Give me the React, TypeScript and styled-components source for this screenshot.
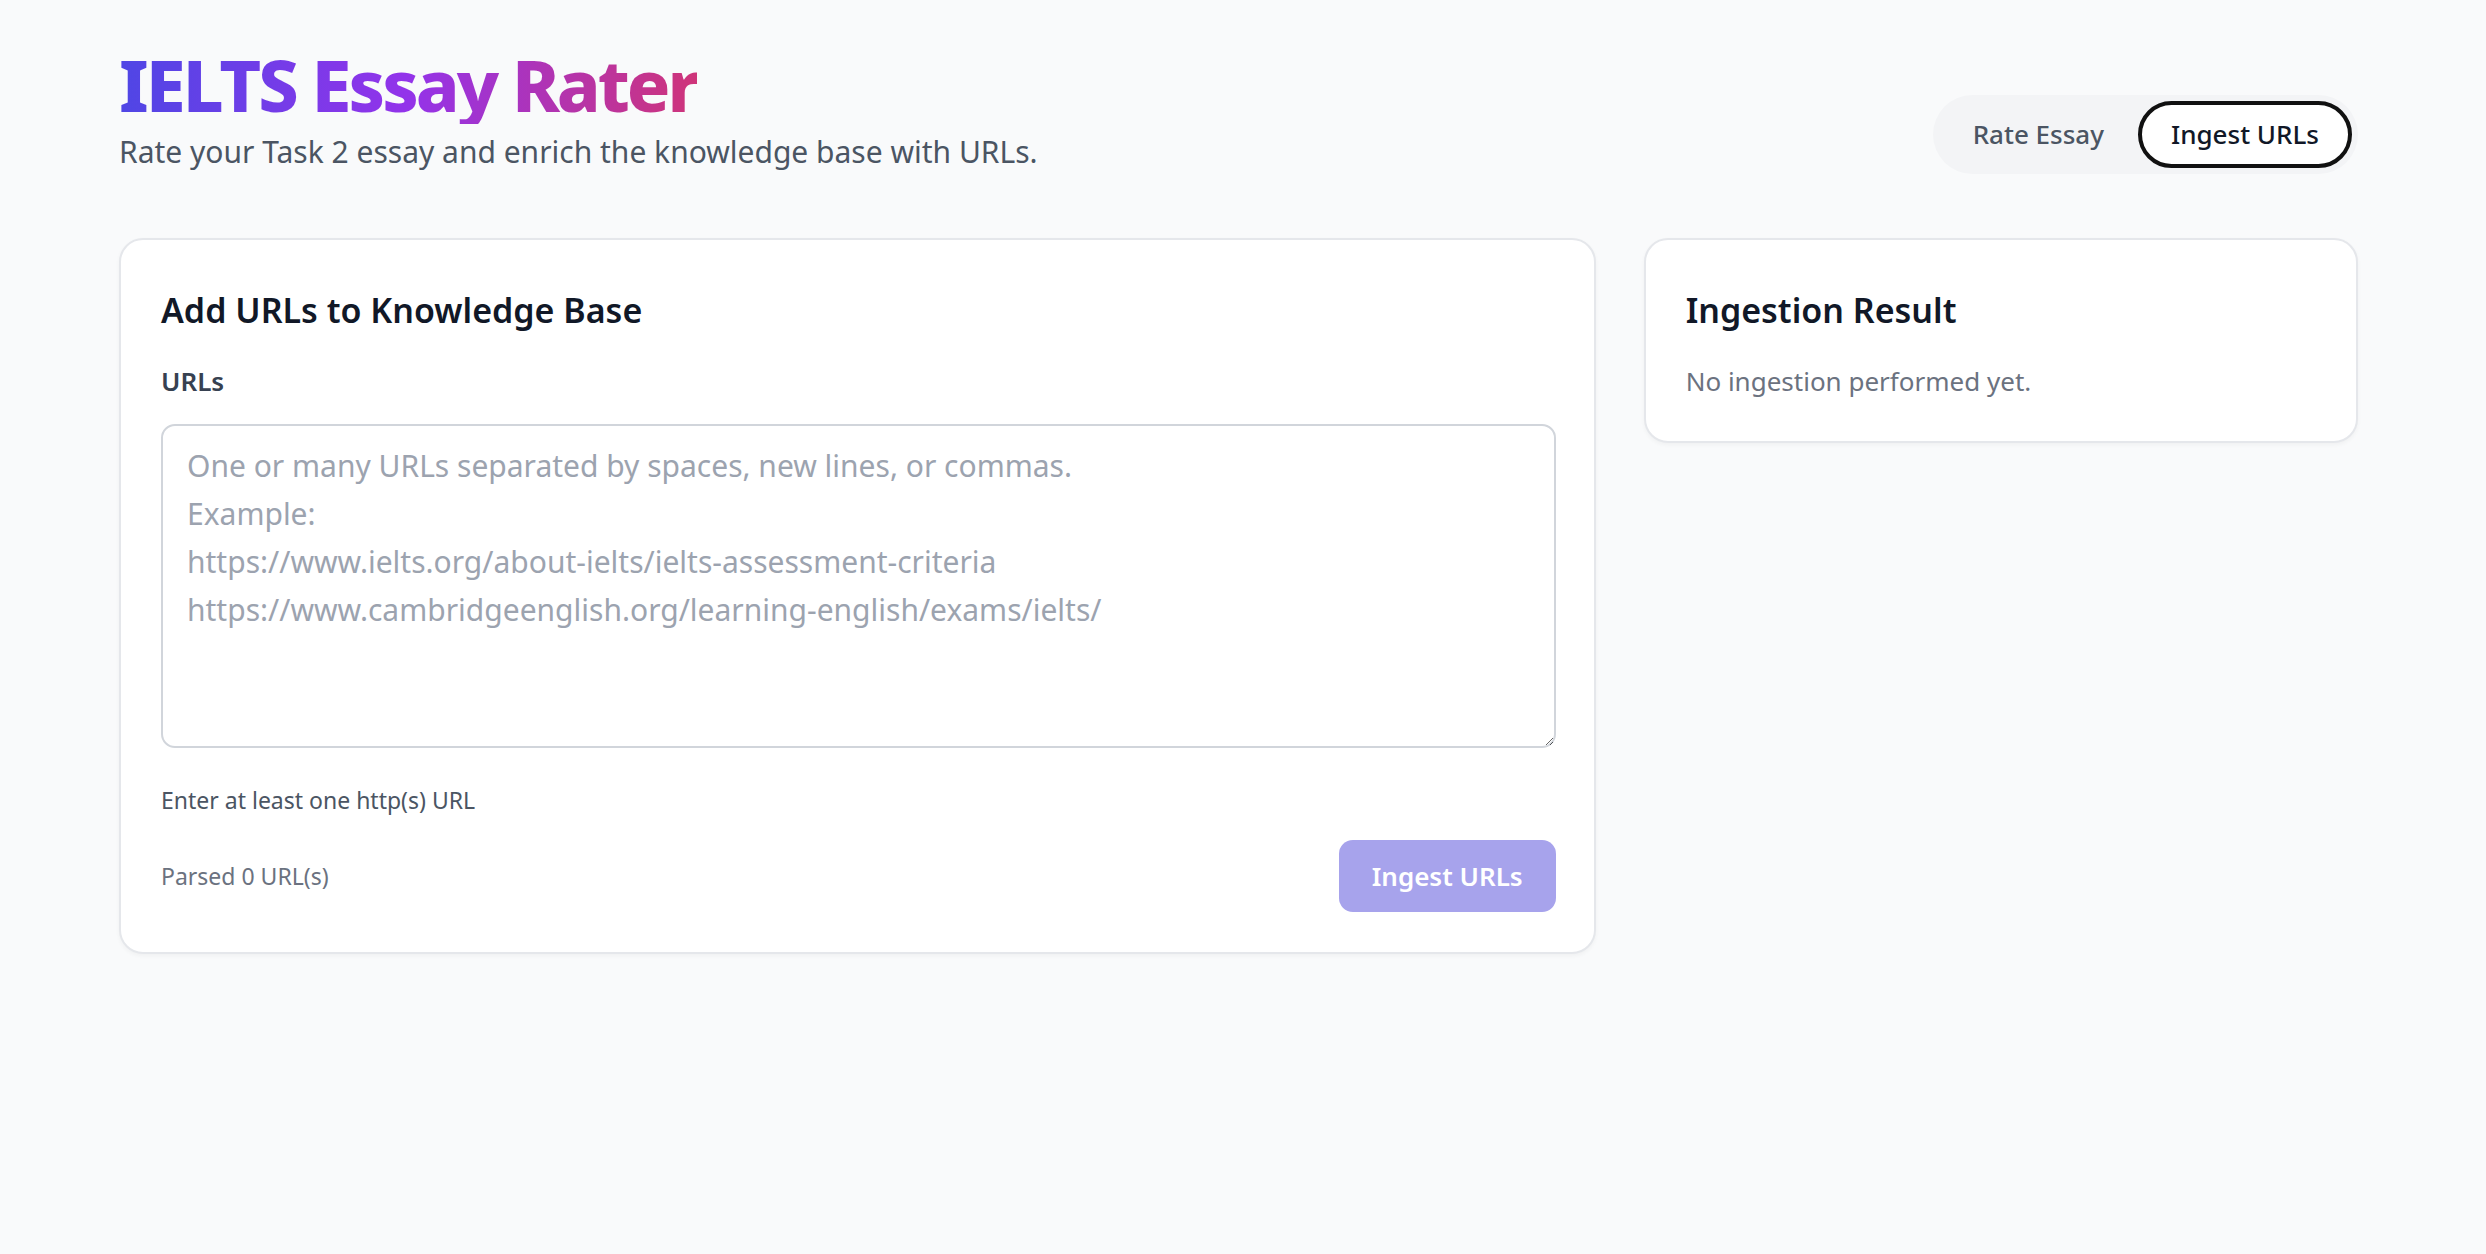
import React, { useState } from "react";
import styled, { createGlobalStyle } from "styled-components";

const Global = createGlobalStyle`
  html, body { margin: 0; padding: 0; background: #f9fafb; }
  body { font-family: "Segoe UI", "Noto Sans", "Open Sans", sans-serif; color: #111827; }
  * { box-sizing: border-box; }
`;

const Page = styled.div`
  min-height: 1254px;
  padding: 44px 128px 0 119px;
`;

const Header = styled.header`
  display: flex;
  justify-content: space-between;
  align-items: flex-end;
`;

const TitleBlock = styled.div`
  display: flex;
  flex-direction: column;
  gap: 8px;
`;

const Title = styled.h1`
  margin: 0;
  font-size: 72px;
  line-height: 80px;
  font-weight: 800;
  letter-spacing: -3px;
  background: linear-gradient(to right, #4f46e5, #9333ea, #cf3479);
  -webkit-background-clip: text;
  background-clip: text;
  color: transparent;
  align-self: flex-start;
`;

const Subtitle = styled.p`
  margin: 0;
  font-size: 30px;
  line-height: 40px;
  color: #4b5563;
`;

const Toggle = styled.div`
  display: flex;
  align-items: center;
  padding: 6px;
  margin-bottom: -2px;
  border-radius: 999px;
  background: #f3f4f6;
`;

const ToggleButton = styled.button<{ $active?: boolean }>`
  font-family: inherit;
  font-size: 26px;
  line-height: 39px;
  font-weight: 500;
  padding: 10px ${(p) => (p.$active ? 29 : 30)}px;
  border-radius: 999px;
  cursor: pointer;
  border: 4px solid ${(p) => (p.$active ? "#111111" : "transparent")};
  background: ${(p) => (p.$active ? "#ffffff" : "transparent")};
  color: ${(p) => (p.$active ? "#111827" : "#4b5563")};
`;

const Grid = styled.main`
  display: grid;
  grid-template-columns: repeat(3, 1fr);
  gap: 48px;
  margin-top: 66px;
  align-items: start;
`;

const Card = styled.section<{ $span?: number }>`
  grid-column: span ${(p) => p.$span ?? 1};
  background: #ffffff;
  border: 2px solid #e5e7eb;
  border-radius: 24px;
  box-shadow: 0 2px 4px rgba(0, 0, 0, 0.04);
  padding: 40px 38px 40px 40px;
  display: flex;
  flex-direction: column;
`;

const CardTitle = styled.h2`
  margin: 0;
  font-size: 34px;
  line-height: 60px;
  font-weight: 600;
  color: #111827;
`;

const Label = styled.label`
  margin-top: 21px;
  font-size: 26px;
  line-height: 40px;
  font-weight: 600;
  color: #374151;
`;

const TextArea = styled.textarea`
  margin-top: 23px;
  width: 100%;
  font-family: inherit;
  font-size: 30px;
  line-height: 48px;
  padding: 16px 24px;
  border: 2px solid #d1d5db;
  border-radius: 14px;
  color: #111827;
  background: #ffffff;
  resize: vertical;
  &::placeholder { color: #9ca3af; }
  &:focus { outline: none; }
`;

const Helper = styled.p`
  margin: 36px 0 0;
  font-size: 23px;
  line-height: 32px;
  color: #4b5563;
`;

const Footer = styled.div`
  margin-top: 24px;
  display: flex;
  justify-content: space-between;
  align-items: center;
`;

const Count = styled.span`
  font-size: 23px;
  line-height: 32px;
  color: #6b7280;
`;

const PrimaryButton = styled.button`
  font-family: inherit;
  font-size: 26px;
  line-height: 40px;
  font-weight: 600;
  color: #ffffff;
  background: #a7a3ec;
  border: none;
  border-radius: 14px;
  padding: 16px 33px;
  cursor: not-allowed;
`;

const Muted = styled.p`
  margin: 21px 0 0;
  font-size: 26px;
  line-height: 40px;
  color: #6b7280;
`;

const placeholder =
  "One or many URLs separated by spaces, new lines, or commas.\nExample:\nhttps://www.ielts.org/about-ielts/ielts-assessment-criteria\nhttps://www.cambridgeenglish.org/learning-english/exams/ielts/";

export default function App() {
  const [tab, setTab] = useState<"rate" | "ingest">("ingest");
  const [value, setValue] = useState("");
  const count = value.split(/[\s,]+/).filter((u) => /^https?:\/\//.test(u)).length;

  return (
    <>
      <Global />
      <Page>
        <Header>
          <TitleBlock>
            <Title>IELTS Essay Rater</Title>
            <Subtitle>Rate your Task 2 essay and enrich the knowledge base with URLs.</Subtitle>
          </TitleBlock>
          <Toggle>
            <ToggleButton $active={tab === "rate"} onClick={() => setTab("rate")}>
              Rate Essay
            </ToggleButton>
            <ToggleButton $active={tab === "ingest"} onClick={() => setTab("ingest")}>
              Ingest URLs
            </ToggleButton>
          </Toggle>
        </Header>
        <Grid>
          <Card $span={2}>
            <CardTitle>Add URLs to Knowledge Base</CardTitle>
            <Label htmlFor="urls">URLs</Label>
            <TextArea
              id="urls"
              rows={6}
              placeholder={placeholder}
              value={value}
              onChange={(e) => setValue(e.target.value)}
            />
            <Helper>Enter at least one http(s) URL</Helper>
            <Footer>
              <Count>Parsed {count} URL(s)</Count>
              <PrimaryButton disabled={count === 0}>Ingest URLs</PrimaryButton>
            </Footer>
          </Card>
          <Card>
            <CardTitle>Ingestion Result</CardTitle>
            <Muted>No ingestion performed yet.</Muted>
          </Card>
        </Grid>
      </Page>
    </>
  );
}
